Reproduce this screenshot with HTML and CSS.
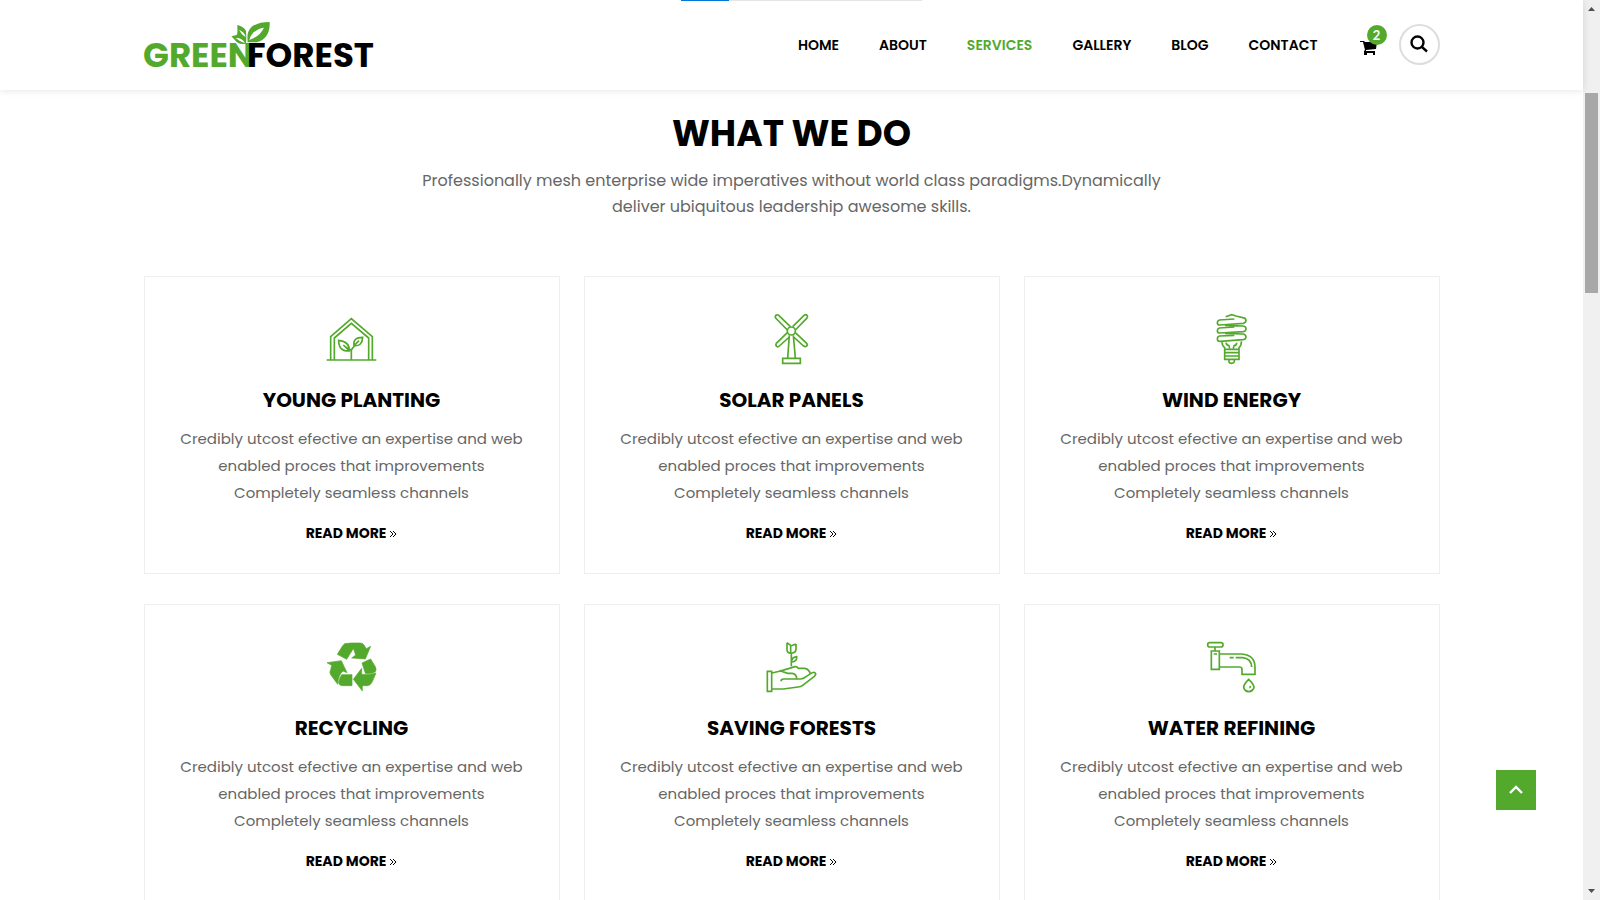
FILE: index.html
```html
<!DOCTYPE html>
<html lang="en">
<head>
<meta charset="utf-8">
<title>Green Forest - Services</title>
<link rel="stylesheet" href="styles.css">
</head>
<body>
<div class="page">
  <header class="header">
    <div class="loading"><span class="loading-value"></span></div>
    <div class="container header-row">
      <a class="logo" href="#" aria-label="Green Forest">
        <svg width="231" height="50" viewBox="0 0 231 50">
          <text class="logo-green" x="-1" y="47">GREEN</text>
          <g transform="scale(.33333) translate(-42 -30)">
            <path fill="#53a92c" d="M352 97C347 56 370 36 419 36C421 76 400 92 380 97Z"/>
            <path fill="#fff" d="M358 90C363 70 380 56 402 53C394 70 378 84 358 90Z"/>
            <path fill="#53a92c" d="M322 45C343 51 351 60 351 80L348 101C330 105 320 98 314 89L304 79L320 75C324 68 322 60 322 45Z"/>
            <path d="M327 59C334 72 341 78 347 81C345 71 338 64 327 59ZM316 84C325 88 331 96 345 99C338 88 330 83 316 84Z" fill="#fff"/>
            <path d="M350 66L351 96" stroke="#fff" stroke-width="3"/>
          </g>
          <text class="logo-black" x="103" y="47">FOREST</text>
        </svg>
      </a>
      <nav class="nav">
        <a href="#">HOME</a>
        <a href="#">ABOUT</a>
        <a href="#" class="active">SERVICES</a>
        <a href="#">GALLERY</a>
        <a href="#">BLOG</a>
        <a href="#">CONTACT</a>
      </nav>
      <a class="cart" href="#" aria-label="Cart">
        <svg width="18" height="16" viewBox="0 0 18 16"><path d="M0 1H4L5 2H17L16 9L6 10V11H15V15H13V13H7V15H4V11L5 10L3 2H0Z"/></svg>
        <span class="badge">2</span>
      </a>
      <button class="search" type="button" aria-label="Search">
        <svg width="18" height="18" viewBox="0 0 18 18" fill="none" stroke="#000" stroke-width="2.4"><circle cx="7.5" cy="7.5" r="6"/><path d="M12 12L17 16.500"/></svg>
      </button>
    </div>
  </header>
  <main class="container services">
    <h1 class="heading">WHAT WE DO</h1>
    <p class="intro">Professionally mesh enterprise wide imperatives without world class paradigms.Dynamically<br>deliver ubiquitous leadership awesome skills.</p>
    <div class="grid">
      <article class="card">
        <svg class="icon" viewBox="51 42 150 150"><path d="M50 180H199M62 180V110L124 56L187 110V180M73 180V114L124 70L176 114V180M124 180V150Q112 147 107 140M124 150Q128 143 137 134M118 153C94 154 86 142 86 121C108 123 119 132 118 153ZM100 135L117 151M132 137C129 119 139 112 158 112C157 130 149 139 132 137ZM133 136L147 122"/></svg>
        <h2 class="title">YOUNG PLANTING</h2>
        <p class="text">Credibly utcost efective an expertise and web<br>enabled proces that improvements<br>Completely seamless channels</p>
        <a class="more" href="#">READ MORE <svg class="chevrons" viewBox="0 0 8 8"><path d="M1 1L4 4L1 7M4 1L7 4L4 7"/></svg></a>
      </article>
      <article class="card">
        <svg class="icon" viewBox="51 42 150 150"><circle cx="124" cy="93" r="12"/><path d="M112 90L77 54Q74 49 79 45Q83 43 87 47L121 80M128 80L162 46Q168 42 172 47Q174 51 170 55L136 90M112 98L79 130Q76 136 80 139Q84 142 88 138L118 111M136 98L170 130Q174 135 169 139Q165 141 161 138L131 111M118 106L113 174M130 106L136 174M98 175H151V190H98Z"/></svg>
        <h2 class="title">SOLAR PANELS</h2>
        <p class="text">Credibly utcost efective an expertise and web<br>enabled proces that improvements<br>Completely seamless channels</p>
        <a class="more" href="#">READ MORE <svg class="chevrons" viewBox="0 0 8 8"><path d="M1 1L4 4L1 7M4 1L7 4L4 7"/></svg></a>
      </article>
      <article class="card">
        <svg class="icon" viewBox="51 42 150 150"><path d="M107 50L125 44L138 48M133 57L88 60Q82 62 82 68Q82 75 90 75L160 70Q168 68 168 61Q167 54 158 53L138 48M133 81L88 84Q82 86 82 92Q82 99 90 99L160 95Q168 93 168 86Q168 79 158 78L105 76M133 106L88 108Q82 110 82 116Q82 124 90 124L160 119Q168 117 168 110Q167 103 158 102L105 100M96 126Q96 137 104 143V148H147V143Q155 136 154 124M108 128Q109 136 117 137L119 145M140 128Q140 136 132 137L130 145M104 151V158H147V151M104 160V168H147V160M104 169V178H147V169M111 178H137M117 179V186Q118 190 125 190Q132 190 133 185V179"/></svg>
        <h2 class="title">WIND ENERGY</h2>
        <p class="text">Credibly utcost efective an expertise and web<br>enabled proces that improvements<br>Completely seamless channels</p>
        <a class="more" href="#">READ MORE <svg class="chevrons" viewBox="0 0 8 8"><path d="M1 1L4 4L1 7M4 1L7 4L4 7"/></svg></a>
      </article>
      <article class="card">
        <svg class="icon solid" viewBox="51 36 150 150"><path d="M82 73L98 47Q103 39 113 40L123 41Q129 48 131 54L110 88ZM118 39H151Q158 39 162 45L169 56L182 49L166 87L125 84L137 75L131 58Q127 46 118 39ZM156 99L182 87L196 110Q201 120 195 126Q182 132 166 130ZM198 129L186 157Q182 166 172 167H157V183L130 148L155 115V133Q176 135 198 129ZM51 98L94 92L111 128L99 123Q85 134 83 163L62 134Q57 126 62 119L65 106ZM95 134H126V167H96Q86 166 86 157Q88 144 95 134Z"/></svg>
        <h2 class="title">RECYCLING</h2>
        <p class="text">Credibly utcost efective an expertise and web<br>enabled proces that improvements<br>Completely seamless channels</p>
        <a class="more" href="#">READ MORE <svg class="chevrons" viewBox="0 0 8 8"><path d="M1 1L4 4L1 7M4 1L7 4L4 7"/></svg></a>
      </article>
      <article class="card">
        <svg class="icon" viewBox="51 36 150 150"><path d="M52 124H65V184H52ZM66 129L88 124Q93 121 98 121L135 110Q141 109 145 115H165Q178 118 181 132M90 122L113 130H127Q140 133 140 146M93 154Q93 147 101 147H151Q160 147 168 140L187 128Q194 125 197 131Q198 135 193 139L158 166Q153 170 144 171L100 177H66M124 109V71M111 38L122 46M138 42L122 48V69M111 38V59Q111 69 124 70Q137 68 138 59V42M125 96Q124 82 140 80Q142 94 125 96Z"/></svg>
        <h2 class="title">SAVING FORESTS</h2>
        <p class="text">Credibly utcost efective an expertise and web<br>enabled proces that improvements<br>Completely seamless channels</p>
        <a class="more" href="#">READ MORE <svg class="chevrons" viewBox="0 0 8 8"><path d="M1 1L4 4L1 7M4 1L7 4L4 7"/></svg></a>
      </article>
      <article class="card">
        <svg class="icon" viewBox="51 36 150 150"><rect x="53" y="38" width="46" height="13" rx="6"/><path d="M75 51V63M64 63H88V118H64ZM71 72H81M89 72H155Q195 75 195 112V133H156V117Q155 111 149 111H89M119 83H131M137 83H157Q184 85 185 111M176 148Q161 163 161 171Q163 184 176 185Q190 184 192 171Q191 162 176 148ZM181 168Q182 172 178 173"/></svg>
        <h2 class="title">WATER REFINING</h2>
        <p class="text">Credibly utcost efective an expertise and web<br>enabled proces that improvements<br>Completely seamless channels</p>
        <a class="more" href="#">READ MORE <svg class="chevrons" viewBox="0 0 8 8"><path d="M1 1L4 4L1 7M4 1L7 4L4 7"/></svg></a>
      </article>
    </div>
  </main>
</div>
<div class="scrollbar" aria-hidden="true">
  <svg width="17" height="17" viewBox="0 0 17 17"><path d="M5 11L8.500 7L12 11Z"/></svg>
  <span class="thumb"></span>
  <svg class="down" width="17" height="17" viewBox="0 0 17 17"><path d="M5 6L8.500 10L12 6Z"/></svg>
</div>
<button class="to-top" type="button" aria-label="Back to top">
  <svg width="14" height="10" viewBox="0 0 14 10"><path d="M1 8L7 2L13 8" fill="none" stroke="#fff" stroke-width="2.4"/></svg>
</button>
</body>
</html>
```
FILE: styles.css
```css
* { box-sizing: border-box; }
body {
  margin: 0;
  height: 100vh;
  overflow: hidden;
  display: flex;
  background: #fff;
  color: #000;
  font-family: Poppins, Inter, "Open Sans", sans-serif;
}
a { color: inherit; text-decoration: none; }
button { padding: 0; font: inherit; cursor: pointer; }
svg { flex: none; }
.page { flex: 1; min-width: 0; }
.container { width: 100%; max-width: 1320px; margin: 0 auto; padding: 0 12px; }

.header { position: relative; height: 90px; background: #fff; box-shadow: 0 0 8px rgba(0, 0, 0, .12); }
.loading { position: absolute; top: 0; left: 43%; width: 241px; height: 1px; background: #e5e5e5; }
.loading-value { display: block; width: 20%; height: 1px; background: #0078d7; }
.header-row { display: flex; align-items: center; height: 88px; }
.logo { display: flex; margin: 2px auto 0 0; }
.logo svg { overflow: visible; }
.logo text { font-weight: 700; font-size: 34px; }
.logo-green { fill: #53a92c; }
.nav { display: flex; gap: 40px; margin-top: 2px; font-size: 14px; font-weight: 600; line-height: 20px; }
.active { color: #53a92c; }
.cart { position: relative; display: flex; margin: 8px 21px 0 42px; }
.badge {
  position: absolute; top: -15px; left: 7px;
  width: 20px; height: 20px; border-radius: 50%;
  background: #53a92c; color: #fff;
  font: 700 13px/20px Lato, sans-serif; text-align: center;
}
.search {
  display: flex; align-items: center; justify-content: center;
  width: 41px; height: 41px; border: 2px solid #ddd; border-radius: 50%; background: #fff;
}

.services { text-align: center; }
.heading { margin: 22px 0 0; font-size: 36px; line-height: 44px; font-weight: 700; }
.intro { margin: 12px 0 0; font-size: 16px; line-height: 26px; color: #666; }
.grid { display: grid; grid-template-columns: repeat(3, 1fr); gap: 30px 24px; margin-top: 56px; }
.card {
  display: flex; flex-direction: column; align-items: center;
  padding: 37px 20px 28px; border: 1px solid #eee;
}
.icon { width: 50px; height: 50px; fill: none; stroke: #53a92c; stroke-width: 5; overflow: visible; }
.solid { fill: #53a92c; stroke-width: 2; }
.title { margin: 24px 0 13px; font-size: 20px; line-height: 24px; font-weight: 700; }
.text { margin: 0 0 15px; font-size: 15px; line-height: 27px; color: #666; white-space: nowrap; }
.more { font-size: 14px; line-height: 24px; font-weight: 700; }
.chevrons { width: 8px; height: 8px; fill: none; stroke: #000; stroke-width: 1; }

.scrollbar { display: flex; flex-direction: column; align-items: center; width: 17px; background: #f0f0f0; fill: #505050; }
.thumb { width: 13px; height: 200px; margin-top: 76px; background: #a8a8a8; }
.down { margin-top: auto; }
.to-top {
  position: fixed; right: 64px; bottom: 90px;
  display: flex; align-items: center; justify-content: center;
  width: 40px; height: 40px; border: 0; background: #53a92c;
}
```
